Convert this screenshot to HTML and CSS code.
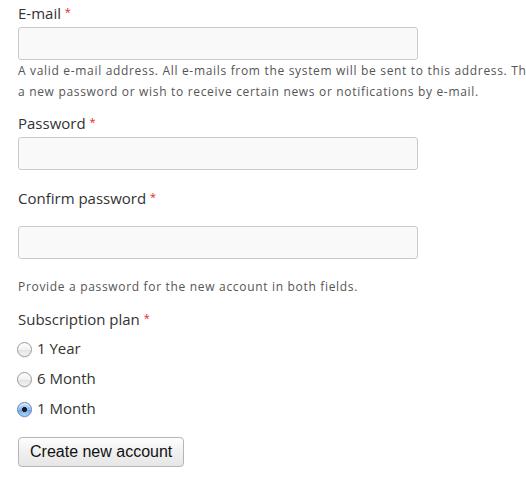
FILE: index.html
```html
<!DOCTYPE html>
<html lang="en">
<head>
    <meta charset="UTF-8">
    <meta name="viewport" content="width=device-width, initial-scale=1.0">
    <title>Create new account</title>
    <link rel="stylesheet" href="styles.css">
</head>
<body>

<form class="register-form">
    <div class="form-item">
        <label class="form-label">E-mail <span class="required">*</span></label>
        <input type="text" class="form-text">
        <div class="description">
            <span class="line">A valid e-mail address. All e-mails from the system will be sent to this address. The e-mail address is not made public and will only be used if you wish to receive</span>
            <span class="line">a new password or wish to receive certain news or notifications by e-mail.</span>
        </div>
    </div>

    <div class="form-item">
        <label class="form-label">Password <span class="required">*</span></label>
        <input type="password" class="form-text">
    </div>

    <div class="form-item">
        <label class="form-label">Confirm password <span class="required">*</span></label>
        <div class="password-confirm"></div>
        <input type="password" class="form-text">
        <div class="description confirm-description">Provide a password for the new account in both fields.</div>
    </div>

    <div class="form-item">
        <label class="form-label">Subscription plan <span class="required">*</span></label>
        <div class="radios">
            <label class="radio"><input type="radio" name="plan">1 Year</label>
            <label class="radio"><input type="radio" name="plan">6 Month</label>
            <label class="radio"><input type="radio" name="plan" checked>1 Month</label>
        </div>
    </div>

    <button type="button" class="form-submit">Create new account</button>
</form>

</body>
</html>
```

FILE: styles.css
```css
html, body {
    overflow: hidden;
}

body {
    font-family: "Open Sans", sans-serif;
    color: #333;
    margin: 0;
    padding: 2px 18px 0;
    background: #fff;
}

.register-form {
    display: flex;
    flex-direction: column;
    align-items: flex-start;
}

.form-item {
    display: flex;
    flex-direction: column;
    align-items: flex-start;
}

.form-label {
    font-size: 15px;
    line-height: 20px;
    margin-bottom: 4px;
}

.required {
    color: #e22;
    font-size: 11px;
    vertical-align: 3px;
}

.form-text {
    box-sizing: border-box;
    width: 400px;
    height: 33px;
    border: 1px solid #cacaca;
    border-radius: 3px;
    background-color: #f9f9f9;
    margin: 0;
}

.description {
    font-size: 12px;
    line-height: 21px;
    letter-spacing: 0.68px;
    color: #555;
    margin-bottom: 10px;
}

.description .line {
    display: block;
    white-space: nowrap;
}

.password-confirm {
    height: 14px;
}

/* the confirm field has no following space in the theme, its description does */
.form-item:nth-child(2) {
    margin-bottom: 17px;
}

.confirm-description {
    margin-top: 17px;
    margin-bottom: 11px;
}

.radios {
    display: flex;
    flex-direction: column;
    margin-top: 0;
    margin-bottom: 14px;
}

.radio {
    font-size: 15px;
    line-height: 30px;
    display: flex;
    align-items: center;
    gap: 5px;
}

.radio input {
    appearance: none;
    -webkit-appearance: none;
    box-sizing: border-box;
    width: 15px;
    height: 15px;
    margin: 2px 0 0 -1px;
    border: 1px solid #9a9a9a;
    border-radius: 50%;
    background: linear-gradient(#fdfdfd 0%, #f2f2f2 50%, #e2e2e2 55%, #f6f6f6 100%);
    box-shadow: inset 0 1px 1px rgba(255, 255, 255, 0.8), 0 1px 1px rgba(0, 0, 0, 0.08);
}

.radio input:checked {
    border-color: #5a7fb8;
    background:
        radial-gradient(circle, #1a1a2a 0, #1a1a2a 2.2px, transparent 2.8px),
        linear-gradient(#cfe3fb 0%, #8ab8ee 50%, #6aa1e6 55%, #b6d7fb 100%);
}

.form-submit {
    font-family: "Liberation Sans", Arial, sans-serif;
    font-size: 16px;
    color: #111;
    padding: 0 11px;
    height: 30px;
    white-space: nowrap;
    border: 1px solid #b5b5b5;
    border-radius: 4px;
    background: linear-gradient(#fefefe, #f0f0f0 50%, #e6e6e6 100%);
    box-shadow: 0 1px 1px rgba(0, 0, 0, 0.05);
}
```
